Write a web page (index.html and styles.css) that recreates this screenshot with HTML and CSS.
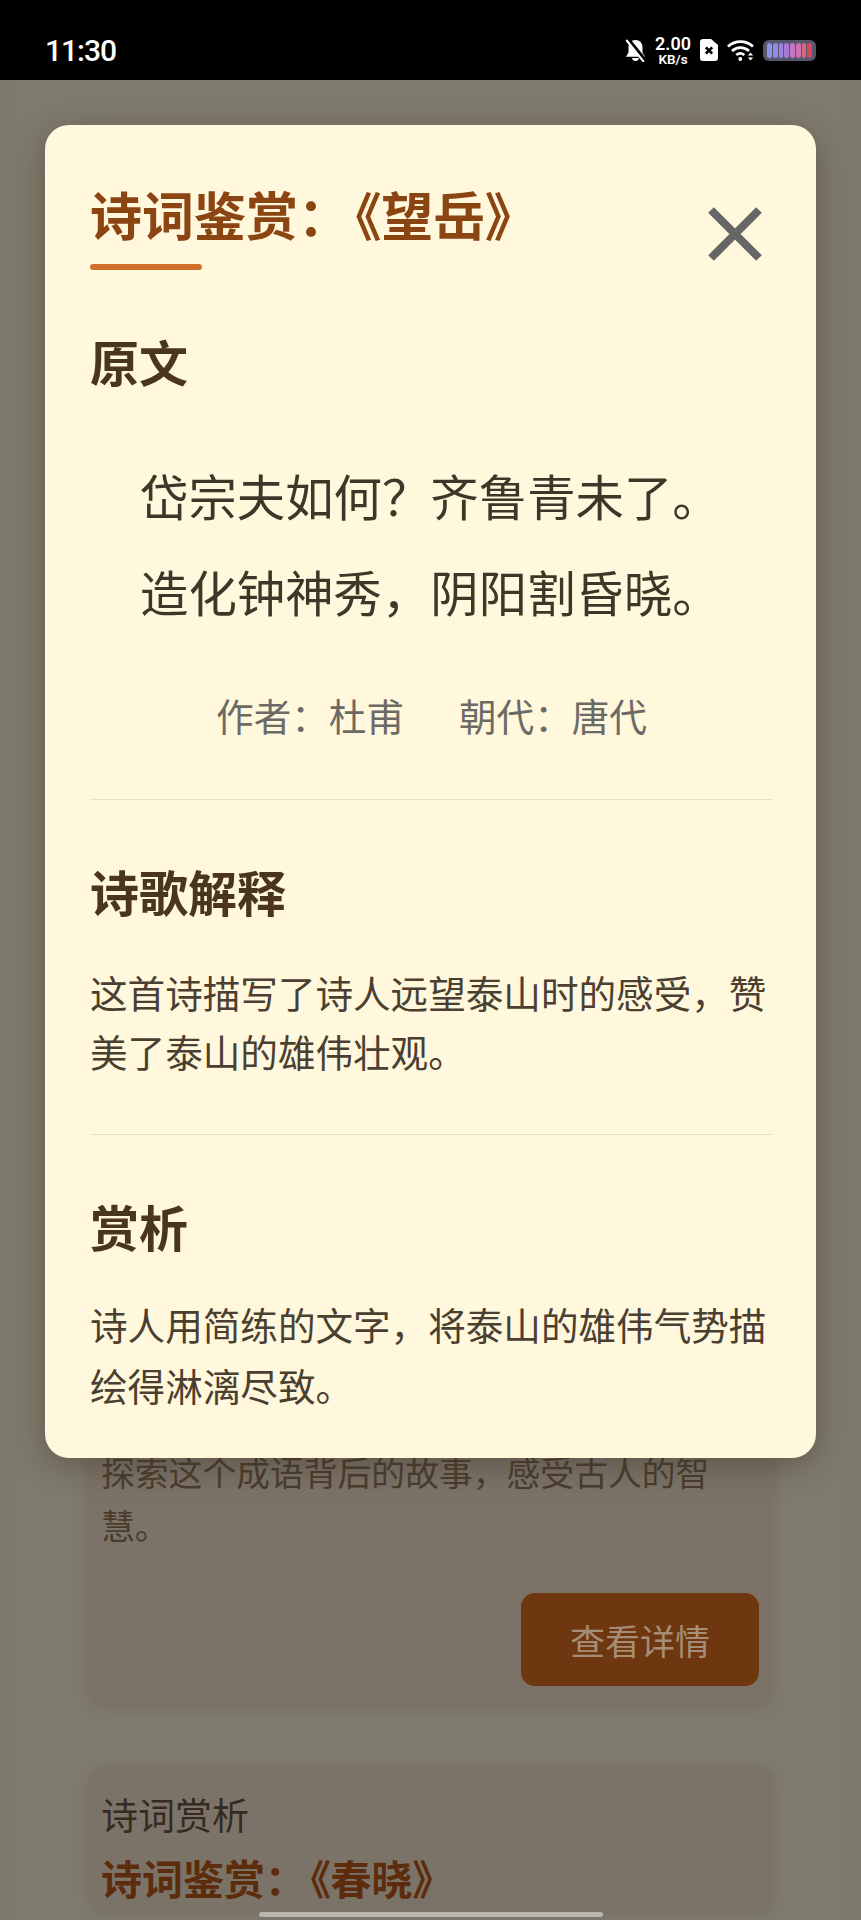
FILE: index.html
```html
<!DOCTYPE html>
<html lang="zh-CN">
<head>
  <meta charset="UTF-8" />
  <meta name="viewport" content="width=device-width, initial-scale=1.0"/>
  <title>诗词鉴赏</title>
  <link rel="stylesheet" href="styles.css">
</head>
<body>
  <div class="status-bar">
    <span class="clock">11:30</span>
    <div class="status-icons">
      <svg class="ic-bell" viewBox="0 0 24 26" width="21" height="23">
        <path d="M12 1c-5 0-8 3.500-8 8.500v6L1 20h22l-3-4.500v-6C20 4.500 17 1 12 1z" fill="#fff"/>
        <path d="M8 21.500c.5 2.500 2.300 3.500 4 3.500s3.500-1 4-3.500z" fill="#fff"/>
        <path d="M3 0l20 25" stroke="#000" stroke-width="5"/>
        <path d="M1.500 1l20 25" stroke="#fff" stroke-width="2.400"/>
      </svg>
      <div class="speed"><b>2.00</b><small>KB/s</small></div>
      <svg class="ic-sim" viewBox="0 0 18 22" width="18" height="22">
        <path d="M3 0h8l7 6v13a3 3 0 0 1-3 3H3a3 3 0 0 1-3-3V3a3 3 0 0 1 3-3z" fill="#fff"/>
        <path d="M5.800 8.300l6.400 6.400M12.200 8.300l-6.400 6.400" stroke="#000" stroke-width="2.600"/>
      </svg>
      <svg class="ic-wifi" viewBox="0 0 27 21" width="27" height="21" fill="none" stroke="#fff" stroke-width="2.800">
        <path d="M1 6.500c7-6.500 18-6.500 25 0"/>
        <path d="M5 11c5-4.500 12-4.500 17 0"/>
        <path d="M9.300 15c2.500-2 5.500-2 8 0"/>
        <circle cx="13.300" cy="19" r="1.900" fill="#fff" stroke="none"/>
        <path d="M23.500 12.500l2.700 3h-5.400zM23.500 20.500l2.700-3h-5.400z" fill="#fff" stroke="none"/>
      </svg>
      <div class="battery">
        <i></i><i></i><i></i><i></i><i></i><i></i><i></i><i></i>
      </div>
    </div>
  </div>

  <div class="page">
    <div class="card card-first">
      <p class="card-desc">探索这个成语背后的故事&#xFF0C;感受古人的智慧。</p>
      <div class="card-actions">
        <button class="detail-btn">查看详情</button>
      </div>
    </div>
    <div class="card card-second">
      <div class="card-tag">诗词赏析</div>
      <div class="card-title">诗词鉴赏<span class="colon">&#xFF1A;</span>《春晓》</div>
    </div>
  </div>

  <div class="home-bar"></div>

  <div class="modal">
    <div class="modal-head">
      <div>
        <h1 class="modal-title">诗词鉴赏<span class="colon">&#xFF1A;</span>《望岳》</h1>
        <div class="title-line"></div>
      </div>
      <svg class="close-icon" viewBox="0 0 54 54" width="54" height="54">
        <path d="M3 3l48 48M51 3L3 51" stroke="#666" stroke-width="8"/>
      </svg>
    </div>

    <section class="block block-first">
      <h2>原文</h2>
      <div class="poem">
        <p>岱宗夫如何&#xFF1F;齐鲁青未了。</p>
        <p>造化钟神秀&#xFF0C;阴阳割昏晓。</p>
      </div>
      <div class="meta">
        <span>作者&#xFF1A;杜甫</span>
        <span>朝代&#xFF1A;唐代</span>
      </div>
    </section>

    <section class="block">
      <h2>诗歌解释</h2>
      <p class="text">这首诗描写了诗人远望泰山时的感受&#xFF0C;赞美了泰山的雄伟壮观。</p>
    </section>

    <section class="block">
      <h2>赏析</h2>
      <p class="text text-last">诗人用简练的文字&#xFF0C;将泰山的雄伟气势描绘得淋漓尽致。</p>
    </section>
  </div>
</body>
</html>
```

FILE: styles.css
```css
* {
  box-sizing: border-box;
}

html, body {
  margin: 0;
  padding: 0;
}

body {
  width: 861px;
  height: 1920px;
  position: relative;
  overflow: hidden;
  background: #7c7b6c;
  font-family: "Noto Sans CJK SC", "Noto Sans", sans-serif;
}

/* status bar */
.status-bar {
  height: 80px;
  background: #000;
  color: #fff;
  display: flex;
  align-items: center;
  justify-content: space-between;
  padding: 20px 45px 0;
}

.clock {
  font-family: "Roboto", sans-serif;
  font-size: 30px;
  font-weight: 500;
  letter-spacing: -1px;
}

.status-icons {
  display: flex;
  align-items: center;
  gap: 9px;
}

.speed {
  display: flex;
  flex-direction: column;
  align-items: center;
  font-family: "Roboto", sans-serif;
}

.speed b {
  font-size: 18px;
  font-weight: 600;
  line-height: 17px;
}

.speed small {
  font-size: 13.500px;
  font-weight: 600;
  line-height: 14px;
}

.battery {
  width: 53px;
  height: 21px;
  padding: 3px 4px;
  display: flex;
  gap: 1px;
  border-radius: 6px;
  background: #56566c;
}

.battery i {
  flex: 1;
  border-radius: 3px;
}

.battery i:nth-child(1) { background: #8c93ea; }
.battery i:nth-child(2) { background: #8f8ce6; }
.battery i:nth-child(3) { background: #9c82dc; }
.battery i:nth-child(4) { background: #a97ad2; }
.battery i:nth-child(5) { background: #c678c8; }
.battery i:nth-child(6) { background: #d072b0; }
.battery i:nth-child(7) { background: #d4687e; }
.battery i:nth-child(8) { background: #d8465c; }

/* page behind the dialog */
.page {
  height: 1840px;
  margin: 0 22px;
  padding: 1325px 68px 0;
  background: #7f7b6d;
  display: flex;
  flex-direction: column;
  gap: 61px;
}

.card {
  padding: 30px 34px 0 13px;
  background: #7c7368;
  border-radius: 16px;
  box-shadow: 0 4px 14px rgba(100, 90, 80, 0.3);
  margin: 0 -2px;
}

.card-first {
  padding-top: 40px;
  padding-bottom: 19px;
}

.card-second {
  padding-top: 22px;
}

.card-desc {
  margin: 0;
  font-size: 33.800px;
  line-height: 53px;
  color: #4a3c2c;
}

.card-actions {
  display: flex;
  justify-content: flex-end;
  margin-top: 42px;
  margin-right: -20px;
}

.detail-btn {
  width: 238px;
  height: 93px;
  border: none;
  border-radius: 14px;
  background: #6f3710;
  color: #a58d76;
  font-family: inherit;
  font-size: 35px;
}

.card-tag {
  font-size: 37px;
  line-height: 52px;
  color: #352b22;
}

.card-title {
  margin-top: 4px;
  font-size: 41px;
  font-weight: 700;
  line-height: 66px;
  color: #5c2c0c;
  font-feature-settings: "palt";
}

/* the colon sits in the middle of a wider gap than the font gives it */
.colon {
  letter-spacing: 0.6em;
}

.home-bar {
  position: absolute;
  left: 259px;
  bottom: 3px;
  width: 344px;
  height: 5px;
  border-radius: 3px;
  background: #b7b5ad;
}

/* dialog */
.modal {
  position: absolute;
  left: 45px;
  top: 125px;
  width: 771px;
  height: 1333px;
  padding: 50px 43px 0 45px;
  background: #fff8dc;
  border-radius: 24px;
  box-shadow: 0 8px 34px rgba(60, 50, 40, 0.45);
}

.modal-head {
  display: flex;
  justify-content: space-between;
  align-items: flex-start;
}

.modal-title {
  margin: 0;
  font-size: 52px;
  font-weight: 700;
  line-height: 78px;
  color: #8b4513;
  font-feature-settings: "palt";
}

.title-line {
  width: 112px;
  height: 6px;
  margin-top: 11px;
  border-radius: 3px;
  background: #cf702a;
}

.close-icon {
  margin: 32px 11px 0 0;
}

.block {
  padding-bottom: 54px;
  border-bottom: 1px solid #e8e0cc;
}

.block-first {
  padding-bottom: 56px;
}

.block:last-child {
  border-bottom: none;
}

.block h2 {
  margin: 0;
  padding-top: 52px;
  font-size: 49px;
  font-weight: 700;
  line-height: 78px;
  color: #4a3520;
}

.poem {
  margin-top: 47px;
  padding-left: 50px;
}

.poem p {
  margin: 0;
  font-size: 48.400px;
  line-height: 96px;
  color: #3f3528;
}

.meta {
  display: flex;
  justify-content: center;
  gap: 55px;
  margin-top: 48px;
  font-size: 37.600px;
  line-height: 56px;
  color: #6c6a64;
}

.text {
  margin: 32px 0 0;
  font-size: 37.600px;
  line-height: 59px;
  color: #4a3f30;
}

.text-last {
  margin-top: 28px;
  line-height: 61px;
}
```
